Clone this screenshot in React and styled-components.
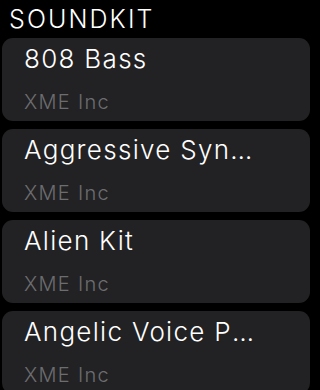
import React from 'react';
import styled, { createGlobalStyle } from 'styled-components';

const GlobalStyle = createGlobalStyle`
  html, body {
    margin: 0;
    padding: 0;
    background: #000;
    overflow: hidden;
  }
  body {
    font-family: Inter, "Noto Sans", "Liberation Sans", sans-serif;
    -webkit-font-smoothing: antialiased;
  }
`;

const Screen = styled.div`
  width: 312px;
  height: 390px;
  background: #000;
  display: flex;
  flex-direction: column;
  overflow: hidden;
`;

const Header = styled.h1`
  flex: none;
  box-sizing: border-box;
  margin: 0;
  padding: 4px 0 0 9px;
  height: 38px;
  font-size: 25px;
  line-height: 30px;
  font-weight: 350;
  letter-spacing: 2.1px;
  color: #fff;
`;

const List = styled.ul`
  list-style: none;
  margin: 0;
  padding: 0 2px;
  display: flex;
  flex-direction: column;
  gap: 8px;
`;

const Card = styled.li`
  flex: none;
  height: 83px;
  box-sizing: border-box;
  padding: 5px 52px 0 22px;
  border-radius: 11px;
  background: #222224;
  display: flex;
  flex-direction: column;
  min-width: 0;
`;

const Title = styled.div`
  font-size: 26px;
  line-height: 32px;
  font-weight: 350;
  color: #fff;
  letter-spacing: 1.3px;
  white-space: nowrap;
  overflow: hidden;
  text-overflow: ellipsis;
`;

const Vendor = styled.div`
  margin-top: 15px;
  font-size: 20px;
  line-height: 24px;
  font-weight: 350;
  color: #6d6d70;
  letter-spacing: 1.3px;
`;

const kits = [
  { name: '808 Bass', vendor: 'XME Inc' },
  { name: 'Aggressive Synths', vendor: 'XME Inc' },
  { name: 'Alien Kit', vendor: 'XME Inc' },
  { name: 'Angelic Voice Pads', vendor: 'XME Inc' },
];

export default function App() {
  return (
    <Screen>
      <GlobalStyle />
      <Header>SOUNDKIT</Header>
      <List>
        {kits.map((kit) => (
          <Card key={kit.name}>
            <Title>{kit.name}</Title>
            <Vendor>{kit.vendor}</Vendor>
          </Card>
        ))}
      </List>
    </Screen>
  );
}
